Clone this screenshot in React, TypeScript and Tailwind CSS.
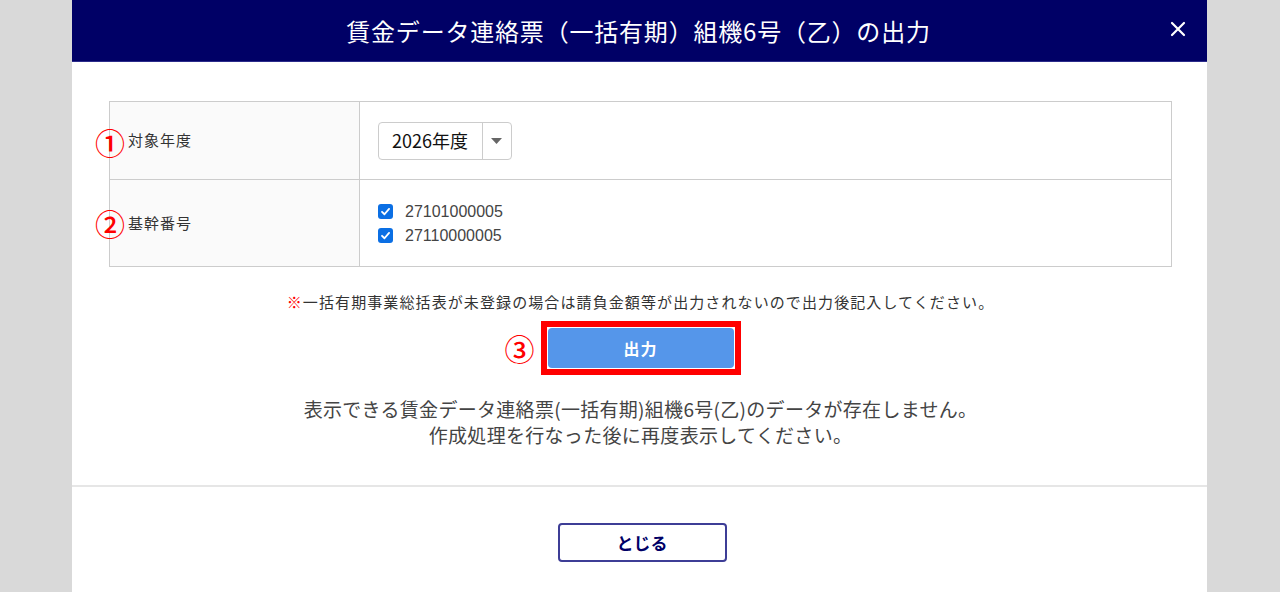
import { useState } from 'react'

const jp = { fontFamily: '"Noto Sans CJK JP", "Noto Sans", sans-serif' }

function CheckBox({ checked }: { checked: boolean }) {
    return (
        <span className={`w-[15px] h-[15px] rounded-[3px] flex items-center justify-center shrink-0 ${checked ? 'bg-[#0b6fe4]' : 'bg-white border border-[#767676]'}`}>
            {checked && (
                <svg width="11" height="11" viewBox="0 0 12 12" fill="none">
                    <path d="M2.2 6.3 L4.9 9 L9.9 3.2" stroke="white" strokeWidth="2" strokeLinecap="round" strokeLinejoin="round" />
                </svg>
            )}
        </span>
    )
}

function Marker({ n, className }: { n: string; className: string }) {
    return (
        <span className={`absolute text-[30px] leading-none font-medium text-[#ff0000] ${className}`}>{n}</span>
    )
}

export default function App() {
    const [codes, setCodes] = useState([
        { id: '27101000005', checked: true },
        { id: '27110000005', checked: true },
    ])

    return (
        <div className="min-h-[592px] h-[592px] overflow-hidden bg-[#d9d9d9]" style={jp}>
            <div className="w-[1135px] ml-[72px] bg-white h-full">
                {/* Header */}
                <div className="relative h-[62px] bg-[#000066] border-b border-[#2b2b8a] flex items-center justify-center">
                    <h1 className="text-white text-[24px] tracking-[0.8px] pr-[2px]">賃金データ連絡票（一括有期）組機6号（乙）の出力</h1>
                    <button className="absolute right-[21px] top-[21px] text-white">
                        <svg width="16" height="16" viewBox="0 0 16 16">
                            <path d="M2 2 L14 14 M14 2 L2 14" stroke="white" strokeWidth="2.2" strokeLinecap="round" />
                        </svg>
                    </button>
                </div>

                {/* Body */}
                <div className="pl-[37px] pr-[35px] pt-[39px] pb-[37px] border-b-2 border-[#e6e6e6]">
                    <div className="relative border border-[#cccccc] text-[#333]">
                        <div className="grid grid-cols-[250px_1fr] h-[78px] border-b border-[#cccccc]">
                            <div className="bg-[#fafafa] border-r border-[#cccccc] flex items-center pl-[18px] text-[15px] tracking-[1px]">対象年度</div>
                            <div className="flex items-center pl-[18px]">
                                <div className="flex h-[38px] border border-[#cccccc] rounded-[4px] bg-white">
                                    <span className="pl-[13px] pr-[14px] flex items-center text-[18px] text-[#111]">2026年度</span>
                                    <span className="w-[29px] border-l border-[#cccccc] flex items-center justify-center">
                                        <svg width="11" height="6" viewBox="0 0 11 6"><path d="M0 0 H11 L5.5 6 Z" fill="#666" /></svg>
                                    </span>
                                </div>
                            </div>
                        </div>
                        <div className="grid grid-cols-[250px_1fr] h-[86px]">
                            <div className="bg-[#fafafa] border-r border-[#cccccc] flex items-center pl-[18px] text-[15px] tracking-[1px]">基幹番号</div>
                            <div className="flex flex-col justify-center pl-[18px] pt-[1px]">
                                {codes.map((c, i) => (
                                    <label
                                        key={c.id}
                                        className="flex items-center gap-[12px] h-[24px] cursor-pointer"
                                        onClick={() => setCodes(codes.map((x, j) => (j === i ? { ...x, checked: !x.checked } : x)))}
                                    >
                                        <CheckBox checked={c.checked} />
                                        <span className="text-[16px] text-[#444]" style={{ fontFamily: '"Liberation Sans", Arial, sans-serif' }}>{c.id}</span>
                                    </label>
                                ))}
                            </div>
                        </div>
                        <Marker n="①" className="left-[-15px] top-[25px]" />
                        <Marker n="②" className="left-[-15px] top-[106px]" />
                    </div>

                    <p className="mt-[25px] text-center text-[15px] leading-[20px] tracking-[1.1px] text-[#333]">
                        <span className="text-[#ff0000]">※</span>一括有期事業総括表が未登録の場合は請負金額等が出力されないので出力後記入してください。
                    </p>

                    <div className="mt-[9px] flex justify-center">
                        <div className="relative border-[6px] border-[#ff0000] p-px">
                            <button className="w-[186px] h-[40px] rounded-[4px] bg-[#5596ea] text-white font-bold text-[16px] tracking-[1px]">出力</button>
                            <Marker n="③" className="left-[-42px] top-[6px]" />
                        </div>
                    </div>

                    <div className="mt-[21px] text-center text-[19px] leading-[26px] tracking-[0.3px] text-[#444]">
                        <p>表示できる賃金データ連絡票(一括有期)組機6号(乙)のデータが存在しません。</p>
                        <p>作成処理を行なった後に再度表示してください。</p>
                    </div>
                </div>

                {/* Footer */}
                <div className="pt-[36px] flex justify-center">
                    <button className="w-[169px] h-[39px] border-2 border-[#3d3d96] rounded-[4px] text-[#000066] font-bold text-[17px] ml-[5px]">とじる</button>
                </div>
            </div>
        </div>
    )
}
